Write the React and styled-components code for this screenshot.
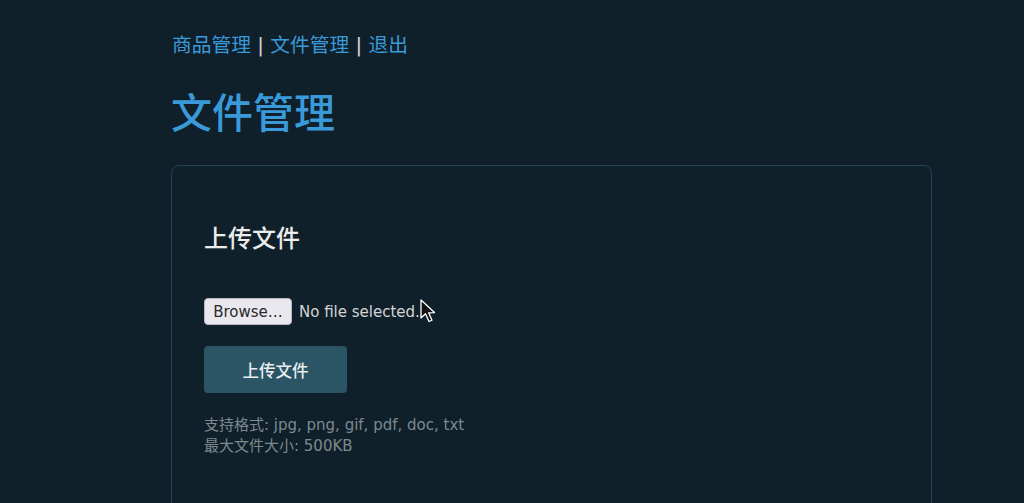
import styled, { createGlobalStyle } from "styled-components";

const GlobalStyle = createGlobalStyle`
  html, body {
    margin: 0;
    background: #10202a;
  }
  body {
    font-family: "DejaVu Sans", "Noto Sans CJK SC", sans-serif;
    color: #e6e6e6;
  }
`;

const Page = styled.div`
  width: 761px;
  margin-left: 171px;
  padding-top: 34px;
  height: 503px;
  box-sizing: border-box;
  overflow: hidden;
`;

const Nav = styled.nav`
  font-size: 19.75px;
  line-height: 24px;
  color: #d8d8d8;
  padding-left: 1px;

  a {
    color: #3a9ad9;
    text-decoration: none;
  }
`;

const Title = styled.h1`
  margin: 30px 0 0;
  font-size: 41px;
  line-height: 52px;
  font-weight: 500;
  color: #3a9ad9;
`;

const Card = styled.section`
  margin-top: 25px;
  border: 1px solid #214456;
  border-radius: 8px;
  padding: 57px 32px 40px;
  min-height: 300px;
`;

const Heading = styled.h2`
  margin: 0;
  font-size: 24px;
  line-height: 32px;
  font-weight: 500;
  color: #ececec;
`;

const FileRow = styled.div`
  position: relative;
  display: flex;
  align-items: center;
  gap: 7px;
  margin-top: 43px;
  font-size: 15px;
  color: #d4d4d4;
`;

const BrowseButton = styled.label`
  display: inline-flex;
  align-items: center;
  justify-content: center;
  width: 88px;
  height: 27px;
  box-sizing: border-box;
  background: #e9e8ee;
  border: 1px solid #b9b8c0;
  border-radius: 4px;
  color: #2a2a2a;
  font-size: 15px;
  cursor: default;

  input {
    display: none;
  }
`;

const Cursor = styled.svg`
  position: absolute;
  left: 216px;
  top: 1px;
`;

const UploadButton = styled.button`
  display: block;
  margin-top: 21px;
  width: 143px;
  height: 47px;
  border: none;
  border-radius: 4px;
  background: #2b5465;
  color: #e8eef0;
  font-family: inherit;
  font-size: 16.5px;
  font-weight: 500;
`;

const Hint = styled.p`
  margin: 22px 0 0;
  font-size: 15px;
  line-height: 21px;
  color: #7c8a8e;
`;

export default function App() {
  return (
    <>
      <GlobalStyle />
      <Page>
        <Nav>
          <a href="#">商品管理</a> | <a href="#">文件管理</a> | <a href="#">退出</a>
        </Nav>
        <Title>文件管理</Title>
        <Card>
          <Heading>上传文件</Heading>
          <FileRow>
            <BrowseButton>
              Browse…
              <input type="file" />
            </BrowseButton>
            <span>No file selected.</span>
            <Cursor width="16" height="26" viewBox="0 0 16 26">
              <path
                d="M1 1 L1 19 L5.5 14.8 L9 22.5 L12 21.2 L8.6 13.8 L14.5 13.6 Z"
                fill="#111"
                stroke="#fff"
                strokeWidth="1.3"
                strokeLinejoin="round"
              />
            </Cursor>
          </FileRow>
          <UploadButton>上传文件</UploadButton>
          <Hint>
            支持格式: jpg, png, gif, pdf, doc, txt
            <br />
            最大文件大小: 500KB
          </Hint>
        </Card>
      </Page>
    </>
  );
}
